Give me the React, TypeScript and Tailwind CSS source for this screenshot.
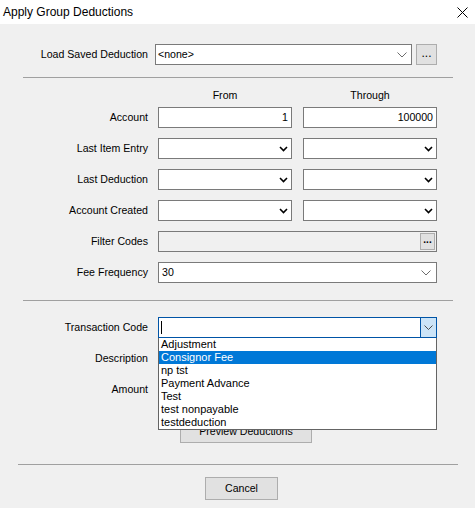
import type { ReactNode } from "react";

const transactionCodes = [
  "Adjustment",
  "Consignor Fee",
  "np tst",
  "Payment Advance",
  "Test",
  "test nonpayable",
  "testdeduction",
];

function Chevron({ bold = false }: { bold?: boolean }) {
  if (bold) {
    return (
      <svg width="9" height="6" viewBox="0 0 9 6" className="block">
        <path d="M1 1 L4.5 4.5 L8 1" fill="none" stroke="#000" strokeWidth="1.6" />
      </svg>
    );
  }
  return (
    <svg width="10" height="6" viewBox="0 0 10 6" className="block">
      <path d="M0.5 0.5 L5 5 L9.5 0.5" fill="none" stroke="#6d6d6d" strokeWidth="1" />
    </svg>
  );
}

function FieldLabel({ children }: { children: ReactNode }) {
  return <div className="w-[148px] shrink-0 text-right leading-[21px]">{children}</div>;
}

function TextBox({ value, className = "" }: { value?: string; className?: string }) {
  return (
    <div
      className={`flex h-[21px] items-center justify-end border border-[#7a7a7a] bg-white px-[3px] ${className}`}
    >
      {value}
    </div>
  );
}

function DateCombo({ className = "" }: { className?: string }) {
  return (
    <div className={`flex h-[21px] items-center justify-end border border-[#7a7a7a] bg-white pr-[3px] ${className}`}>
      <Chevron bold />
    </div>
  );
}

function RangeRow({ label, children }: { label: string; children: ReactNode }) {
  return (
    <div className="flex h-[21px] items-center">
      <FieldLabel>{label}</FieldLabel>
      <div className="ml-[10px] flex gap-[11px]">{children}</div>
    </div>
  );
}

export default function App() {
  return (
    <div
      className="h-[508px] w-[475px] overflow-hidden bg-[#f0f0f0] text-[10.6px] text-black"
      style={{ fontFamily: "'Liberation Sans', Arial, sans-serif" }}
    >
      {/* title bar */}
      <div className="flex h-[24px] items-center justify-between bg-white pl-[3px] pr-[7px]">
        <span className="text-[12px]">Apply Group Deductions</span>
        <svg width="11" height="11" viewBox="0 0 11 11">
          <path d="M0.5 0.5 L10.5 10.5 M10.5 0.5 L0.5 10.5" stroke="#000" strokeWidth="1" />
        </svg>
      </div>

      <div className="flex flex-col">
        {/* saved deduction picker */}
        <div className="mt-[20px] flex h-[21px] items-center">
          <FieldLabel>Load Saved Deduction</FieldLabel>
          <div className="ml-[7px] flex h-[21px] w-[257px] items-center justify-between border border-[#7a7a7a] bg-white pl-[2px] pr-[4px]">
            <span>&lt;none&gt;</span>
            <Chevron />
          </div>
          <button className="ml-[4px] flex h-[21px] w-[21px] items-center justify-center border border-[#adadad] bg-[#e1e1e1] pb-[3px] text-[12px] leading-none">
            ...
          </button>
        </div>

        <div className="ml-[23px] mt-[12px] h-px w-[430px] bg-[#a0a0a0]" />

        {/* range filters */}
        <div className="ml-[158px] mt-[10px] flex h-[16px] items-center">
          <div className="w-[134px] text-center">From</div>
          <div className="ml-[11px] w-[134px] text-center">Through</div>
        </div>

        <div className="mt-[3px] flex flex-col gap-[10px]">
          <RangeRow label="Account">
            <TextBox value="1" className="w-[134px]" />
            <TextBox value="100000" className="w-[134px]" />
          </RangeRow>
          <RangeRow label="Last Item Entry">
            <DateCombo className="w-[134px]" />
            <DateCombo className="w-[134px]" />
          </RangeRow>
          <RangeRow label="Last Deduction">
            <DateCombo className="w-[134px]" />
            <DateCombo className="w-[134px]" />
          </RangeRow>
          <RangeRow label="Account Created">
            <DateCombo className="w-[134px]" />
            <DateCombo className="w-[134px]" />
          </RangeRow>

          <div className="flex h-[21px] items-center">
            <FieldLabel>Filter Codes</FieldLabel>
            <div className="ml-[10px] flex h-[21px] w-[279px] items-center justify-end border border-[#7a7a7a] bg-[#f0f0f0] pr-px">
              <div className="flex h-[17px] w-[15px] items-center justify-center border border-[#adadad] bg-[#e1e1e1] pb-[4px] text-[10px] font-bold leading-none">
                ...
              </div>
            </div>
          </div>

          <div className="flex h-[21px] items-center">
            <FieldLabel>Fee Frequency</FieldLabel>
            <div className="ml-[10px] flex h-[21px] w-[279px] items-center justify-between border border-[#7a7a7a] bg-white pl-[3px] pr-[5px]">
              <span>30</span>
              <Chevron />
            </div>
          </div>
        </div>

        <div className="ml-[23px] mt-[17px] h-px w-[430px] bg-[#a0a0a0]" />

        {/* deduction details */}
        <div className="mt-[16px] flex flex-col gap-[10px]">
          <div className="flex h-[21px] items-center">
            <FieldLabel>Transaction Code</FieldLabel>
            <div className="relative ml-[10px] w-[279px]">
              <div className="flex h-[21px] items-stretch border border-[#0054a6] bg-white">
                <div className="flex flex-1 items-center pl-[2px]">
                  <div className="h-[13px] w-px bg-black" />
                </div>
                <div className="flex w-[16px] items-center justify-center border-l border-[#0054a6] bg-[#cce4f7]">
                  <svg width="9" height="5" viewBox="0 0 9 5" className="block">
                    <path d="M0.5 0.5 L4.5 4.5 L8.5 0.5" fill="none" stroke="#4d4d4d" strokeWidth="1" />
                  </svg>
                </div>
              </div>
              <ul className="absolute left-0 top-full z-10 w-full border border-t-0 border-[#646464] bg-white text-[11px]">
                {transactionCodes.map((code) => (
                  <li
                    key={code}
                    className={`h-[13px] pl-[2px] leading-[13px] ${
                      code === "Consignor Fee" ? "bg-[#0078d7] text-white" : ""
                    }`}
                  >
                    {code}
                  </li>
                ))}
              </ul>
            </div>
          </div>

          <div className="flex h-[21px] items-center">
            <FieldLabel>Description</FieldLabel>
            <TextBox className="ml-[10px] w-[279px]" />
          </div>

          <div className="flex h-[21px] items-center">
            <FieldLabel>Amount</FieldLabel>
            <TextBox className="ml-[10px] w-[134px]" />
          </div>
        </div>

        <button className="ml-[180px] mt-[20px] h-[23px] w-[132px] border border-[#adadad] bg-[#e1e1e1]">
          Preview Deductions
        </button>

        <div className="ml-[18px] mt-[21px] h-px w-[440px] bg-[#a0a0a0]" />

        <button className="ml-[205px] mt-[12px] h-[23px] w-[73px] border border-[#adadad] bg-[#e1e1e1]">
          Cancel
        </button>
      </div>
    </div>
  );
}
